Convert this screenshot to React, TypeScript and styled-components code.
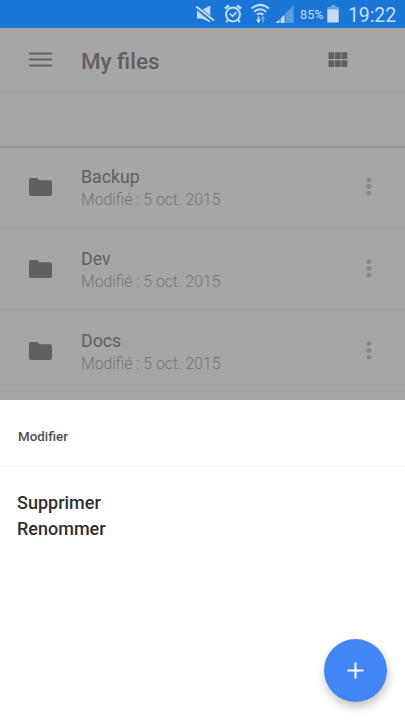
import React from "react";
import styled, { createGlobalStyle } from "styled-components";

const GlobalStyle = createGlobalStyle`
  *, *::before, *::after { box-sizing: border-box; }
  html, body { margin: 0; padding: 0; }
  body { font-family: Roboto, "Liberation Sans", sans-serif; background: #fff; overflow: hidden; }
  svg { display: block; flex: none; }
`;

const Screen = styled.div`
  position: relative;
  display: flex;
  flex-direction: column;
  width: 405px;
  height: 720px;
  overflow: hidden;
  background: #a6a6a6;
`;

const StatusBar = styled.header`
  display: flex;
  flex: none;
  align-items: center;
  height: 28px;
  padding-left: 195px;
  background: #1976d6;
  color: #c6dcf4;
`;

const StatusIcon = styled.svg<{ $gap: number }>`
  height: 28px;
  margin-right: ${(p) => p.$gap}px;
`;

const BatteryLevel = styled.span`
  width: 27px;
  font-size: 12.5px;
  line-height: 28px;
  padding-top: 2px;
  letter-spacing: 0.1px;
`;

const Clock = styled.span`
  font-size: 19.5px;
  line-height: 28px;
  padding-top: 4px;
  letter-spacing: -0.1px;
`;

const Toolbar = styled.div`
  display: flex;
  flex: none;
  align-items: center;
  height: 64px;
  padding: 0 57px 0 28px;
  border-bottom: 1px solid #a0a0a0;
  color: #606060;
`;

const Title = styled.h1`
  flex: 1;
  margin: 2px 0 0 28px;
  font-size: 22.4px;
  line-height: 30px;
  font-weight: 500;
`;

const PathBar = styled.div`
  flex: none;
  height: 56px;
  border-bottom: 2px solid #969696;
`;

const FileList = styled.ul`
  flex: none;
  height: 254px;
  margin: -2px 0 0;
  padding: 0;
  list-style: none;
  overflow: hidden;
`;

const FileRow = styled.li`
  display: flex;
  align-items: center;
  height: 82px;
  padding: 0 30px 0 28px;
  border-bottom: 1px solid #a0a0a0;
  color: #606060;
`;

const FileInfo = styled.div`
  flex: 1;
  margin: 2px 0 0 28px;
`;

const FileName = styled.div`
  font-size: 17.8px;
  line-height: 23px;
`;

const FileDate = styled.div`
  font-size: 15.75px;
  line-height: 23px;
  font-weight: 300;
  color: #737373;
`;

const Sheet = styled.section`
  flex: 1;
  background: #fff;
`;

const SheetTitle = styled.h2`
  height: 67px;
  margin: 0;
  padding: 5px 18px 0;
  border-bottom: 1px solid #f4f4f4;
  font-size: 13.4px;
  line-height: 64px;
  font-weight: 500;
  color: #505050;
`;

const ActionList = styled.div`
  display: flex;
  flex-direction: column;
  align-items: flex-start;
  padding: 23px 17px;
`;

const Action = styled.button`
  height: 26px;
  padding: 0;
  border: 0;
  background: none;
  font-family: inherit;
  font-size: 18px;
  line-height: 26px;
  font-weight: 500;
  color: #303030;
`;

const AddButton = styled.button`
  position: absolute;
  right: 18px;
  bottom: 18px;
  display: flex;
  align-items: center;
  justify-content: center;
  width: 63px;
  height: 63px;
  padding: 0;
  border: 0;
  border-radius: 50%;
  background: #4285f4;
  box-shadow: 1px 5px 10px rgba(0, 0, 0, 0.24);
`;

const MuteIcon = () => (
  <StatusIcon $gap={9} width="20" viewBox="0 0 20 28" fill="currentColor">
    <path d="M2 10h5L15.300 5.500v17L7 18.500H2z" />
    <path d="M1 7l17.500 14" stroke="#1976d6" strokeWidth="4.200" />
    <path d="M1.300 6.500l17.500 14" stroke="currentColor" strokeWidth="2" />
  </StatusIcon>
);

const AlarmIcon = () => (
  <StatusIcon $gap={8} width="18" viewBox="0 0 18 28" fill="none" stroke="currentColor" strokeWidth="2">
    <circle cx="9" cy="14.500" r="6.900" />
    <path d="M1 8.500l4-3M17 8.500l-4-3" strokeWidth="2.400" />
    <path d="M3.800 20l-1.600 2.300M14.200 20l1.600 2.300" />
    <path d="M5.800 13.500l2.700 2.800 4-4.200" strokeWidth="1.600" />
  </StatusIcon>
);

const WifiIcon = () => (
  <StatusIcon $gap={5} width="20" viewBox="0 0 20 28" fill="none" stroke="currentColor" strokeWidth="2">
    <path d="M1.500 8.500q8.700-7.200 17.400 0M4.200 11.700q6-4.800 12 0M7 14.700q3.200-2.400 6.400 0" />
    <path d="M8.500 16.500v5" strokeWidth="1.600" />
    <path d="M5.900 19.500h5.200L8.500 23.500z" fill="currentColor" stroke="none" />
    <path d="M13 22.500v-4" strokeWidth="1.600" opacity="0.5" />
    <path d="M10.700 19h4.600L13 15.500z" fill="currentColor" stroke="none" opacity="0.5" />
  </StatusIcon>
);

const SignalIcon = () => (
  <StatusIcon $gap={6} width="19" viewBox="0 0 19 28" fill="currentColor">
    <path d="M10.500 23V13.200l8.200-8V23z" opacity="0.38" />
    <path d="M.5 23l4-3.500V23zM5.600 23v-4.500l4-4V23z" />
  </StatusIcon>
);

const BatteryIcon = () => (
  <StatusIcon $gap={8} width="13" viewBox="0 0 13 28" fill="currentColor">
    <path d="M4 5h4.500v2H12v2.500H.5V7H4z" opacity="0.45" />
    <path d="M.3 9.300h11.400v13.200H.3z" />
  </StatusIcon>
);

const MenuIcon = () => (
  <svg width="25" height="24" viewBox="0 0 25 24" stroke="currentColor" strokeWidth="2" strokeLinecap="round">
    <path d="M1.800 5.500h21.400M1.800 11.500h21.400M1.800 17.500h21.400" />
  </svg>
);

const GridIcon = () => (
  <svg width="20" height="16" viewBox="0 0 20 16" fill="currentColor">
    <path d="M.5 .3h5.800v6.700H.5zM7 .3h5.800v6.700H7zM13.500 .3h5.800v6.700h-5.800zM.5 8.300h5.800V15H.5zM7 8.300h5.800V15H7zM13.500 8.300h5.800V15h-5.800z" />
  </svg>
);

const FolderIcon = () => (
  <svg width="25" height="20" viewBox="0 0 25 20" fill="currentColor">
    <path d="M3 1h6.300l2.200 2.300h10.300a2.200 2.200 0 0 1 2.200 2.200v11.300a2.200 2.200 0 0 1-2.200 2.200H3.200A2.200 2.200 0 0 1 1 16.800V3A2 2 0 0 1 3 1z" />
  </svg>
);

const MoreIcon = () => (
  <svg width="12" height="20" viewBox="0 0 12 20" fill="#868686">
    <circle cx="6" cy="2.800" r="2.400" />
    <circle cx="6" cy="9.500" r="2.400" />
    <circle cx="6" cy="16.200" r="2.400" />
  </svg>
);

const files = [
  { name: "Backup", date: "5 oct. 2015" },
  { name: "Dev", date: "5 oct. 2015" },
  { name: "Docs", date: "5 oct. 2015" },
];

export default function App() {
  return (
    <>
      <GlobalStyle />
      <Screen>
        <StatusBar>
          <MuteIcon />
          <AlarmIcon />
          <WifiIcon />
          <SignalIcon />
          <BatteryLevel>85%</BatteryLevel>
          <BatteryIcon />
          <Clock>19:22</Clock>
        </StatusBar>
        <Toolbar>
          <MenuIcon />
          <Title>My files</Title>
          <GridIcon />
        </Toolbar>
        <PathBar />
        <FileList>
          {files.map((file) => (
            <FileRow key={file.name}>
              <FolderIcon />
              <FileInfo>
                <FileName>{file.name}</FileName>
                <FileDate>Modifié : {file.date}</FileDate>
              </FileInfo>
              <MoreIcon />
            </FileRow>
          ))}
        </FileList>
        <Sheet>
          <SheetTitle>Modifier</SheetTitle>
          <ActionList>
            <Action>Supprimer</Action>
            <Action>Renommer</Action>
          </ActionList>
        </Sheet>
        <AddButton aria-label="+">
          <svg width="17" height="17" viewBox="0 0 17 17" stroke="#fff" strokeWidth="2">
            <path d="M8.500 .5v16M.5 8.500h16" />
          </svg>
        </AddButton>
      </Screen>
    </>
  );
}
